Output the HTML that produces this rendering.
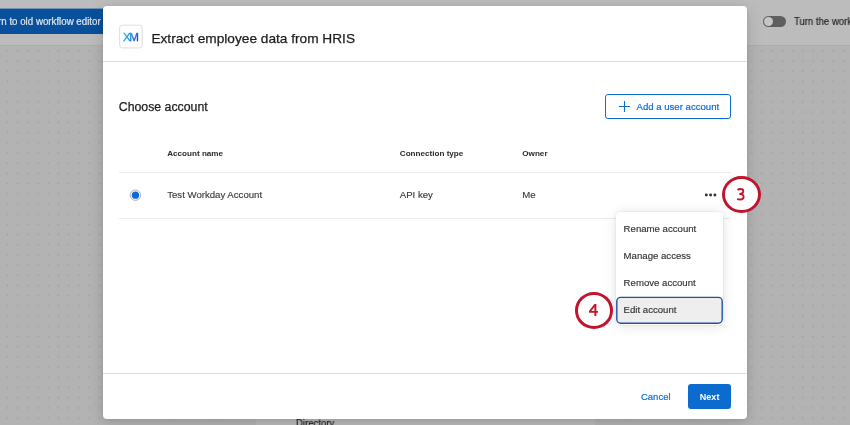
<!DOCTYPE html>
<html>
<head>
<meta charset="utf-8">
<style>
*{box-sizing:border-box;margin:0;padding:0}
html,body{width:850px;height:425px;overflow:hidden}
body{font-family:"Liberation Sans",sans-serif;background:#b3b3b3;position:relative;color:#333}
.abs{position:absolute}
#modal,#oldbtn,#turn,#dir{will-change:transform}
#canvas{left:0;top:0;width:850px;height:425px}
#topbar{left:0;top:0;width:850px;height:46px;background:#bcbcbc;border-bottom:1px solid #acacac}
#oldbtn{left:-80px;top:8px;width:183px;height:26px;background:#08509c;color:#e2e6ee;font-size:10.4px;line-height:25px;white-space:nowrap;border-top:1px solid rgba(222,212,204,.5)}
#oldbtn span{position:absolute;right:2px;top:0;transform:scaleX(.935);transform-origin:100% 50%;-webkit-text-stroke:.2px #e2e6ee}
#toggle{left:763px;top:16px;width:22.6px;height:11px;border-radius:6px;background:#5e5e5e}
#toggle i{position:absolute;left:1px;top:1px;width:9px;height:9px;border-radius:50%;background:#c6c6c6}
#turn{-webkit-text-stroke:.2px #262626;left:794px;top:14.9px;font-size:10.5px;line-height:13px;color:#262626;white-space:nowrap;transform:scaleX(.91);transform-origin:0 50%}
#card{left:256px;top:419px;width:339px;height:10px;background:#bababa}
#dir{-webkit-text-stroke:.2px #262626;left:296.3px;top:416.9px;font-size:10.5px;line-height:13px;color:#262626;transform:scaleX(.91);transform-origin:0 50%}
#modal{left:103px;top:6px;width:644.4px;height:413px;background:#fff;border-radius:4px;box-shadow:0 4px 16px rgba(0,0,0,.15),0 1px 4px rgba(0,0,0,.08)}
#hline{left:0;top:55px;width:100%;height:1px;background:#dcdcdc}
#fline{left:0;top:367px;width:100%;height:1px;background:#dcdcdc}
#xm{left:13px;top:15px;width:30px;height:30px}
#title{left:48.4px;top:24px;font-size:13.68px;line-height:18px;color:#1c1c1c;-webkit-text-stroke:.25px #1c1c1c;white-space:nowrap}
#choose{left:15.8px;top:92.5px;font-size:12.3px;line-height:16px;color:#1c1c1c;-webkit-text-stroke:.25px #1c1c1c;white-space:nowrap}
#addbtn{left:502px;top:88px;width:126px;height:25px;border:1px solid #0b6ed0;border-radius:3px;color:#0b6ed0;font-size:9.6px;line-height:23px;white-space:nowrap}
#addbtn span{position:absolute;left:30.5px;top:0;-webkit-text-stroke:.2px #0b6ed0}
.th{top:143.2px;font-size:8.12px;font-weight:bold;line-height:10px;color:#2a2a2a;white-space:nowrap}
.td{top:182.8px;font-size:9.62px;line-height:12px;color:#3c3c3c;-webkit-text-stroke:.15px #3c3c3c;white-space:nowrap}
.rline{left:16px;width:612px;height:1px;background:#ebebeb}
#menu{left:513px;top:206px;width:107px;height:113px;background:#fff;border-radius:4px;box-shadow:0 1px 14px rgba(0,0,0,.11),0 0 3px rgba(0,0,0,.10)}
.mi{left:7.6px;font-size:9.62px;line-height:12px;color:#333;-webkit-text-stroke:.15px #333;white-space:nowrap}
.call{width:38.5px;height:37.1px;border-radius:50%;border:3.2px solid #c3142d;background:#fff}
.call svg{position:absolute;overflow:visible}
#cancel{left:538px;top:385px;font-size:9.9px;line-height:12px;color:#0b6ed0;transform:scaleX(.96);transform-origin:0 50%;-webkit-text-stroke:.2px #0b6ed0}
#next{left:585px;top:378px;width:43px;height:25px;background:#0b6bcf;border-radius:3px;color:#fff;font-weight:bold;font-size:9.8px;line-height:26px;text-align:center}
#next span{display:inline-block;transform:scaleX(.92)}
</style>
</head>
<body>
<svg id="canvas" class="abs" width="850" height="425">
<defs><pattern id="dots" x="2.4" y="45.8" width="10.196" height="10.2" patternUnits="userSpaceOnUse"><circle cx="5.1" cy="5.1" r="0.95" fill="#a2a2a2"/></pattern></defs>
<rect width="850" height="425" fill="#b3b3b3"/>
<rect width="850" height="425" fill="url(#dots)"/>
</svg>
<div id="topbar" class="abs"></div>
<div id="oldbtn" class="abs"><span>Return to old workflow editor</span></div>
<div id="toggle" class="abs"><i></i></div>
<div id="turn" class="abs">Turn the workflow on</div>
<div id="card" class="abs"></div>
<div id="dir" class="abs">Directory</div>

<div id="modal" class="abs">
  <div id="xm" class="abs">
    <svg class="abs" style="left:0;top:0" width="30" height="30" viewBox="0 0 30 30">
      <defs><linearGradient id="g" gradientUnits="userSpaceOnUse" x1="6" y1="9" x2="22" y2="18"><stop offset="0" stop-color="#25d6a4"/><stop offset="0.3" stop-color="#19aee8"/><stop offset="0.65" stop-color="#1a86e6"/><stop offset="1" stop-color="#2430dc"/></linearGradient></defs>
      <rect x="3.7" y="4.2" width="22.5" height="22.7" rx="2.6" fill="#fff" stroke="#dcdcdc" stroke-width="1"/>
      <text x="6.9" y="19.95" font-family="Liberation Sans, sans-serif" font-size="11.6" letter-spacing="-1.35" fill="url(#g)" stroke="url(#g)" stroke-width="0.35">XM</text>
    </svg>
  </div>
  <div id="title" class="abs">Extract employee data from HRIS</div>
  <div id="hline" class="abs"></div>
  <div id="choose" class="abs">Choose account</div>
  <div id="addbtn" class="abs">
    <svg class="abs" style="left:13px;top:6px" width="11" height="11" viewBox="0 0 11 11"><path d="M5.5 0V11M0 5.5H11" stroke="#0b6ed0" stroke-width="1.1" fill="none"/></svg>
    <span>Add a user account</span>
  </div>
  <div class="abs th" style="left:64.2px">Account name</div>
  <div class="abs th" style="left:296.8px">Connection type</div>
  <div class="abs th" style="left:419.3px">Owner</div>
  <div class="abs rline" style="top:166px"></div>
  <svg class="abs" style="left:24px;top:181px" width="17" height="17" viewBox="0 0 17 17"><circle cx="8.4" cy="8.2" r="5.2" fill="#fff" stroke="#a6a6a6" stroke-width="0.9"/><circle cx="8.45" cy="8.2" r="3.65" fill="#0b6bd3"/></svg>
  <div class="abs td" style="left:64.2px">Test Workday Account</div>
  <div class="abs td" style="left:296.8px">API key</div>
  <div class="abs td" style="left:419.3px">Me</div>
  <svg class="abs" style="left:598px;top:184px" width="20" height="10" viewBox="0 0 20 10"><g fill="#2f3338"><circle cx="5.3" cy="5.05" r="1.45"/><circle cx="9.6" cy="5.05" r="1.45"/><circle cx="13.9" cy="5.05" r="1.45"/></g></svg>
  <div class="abs rline" style="top:212px"></div>
  <div id="menu" class="abs">
    <svg class="abs" style="left:0;top:80px" width="107" height="33" viewBox="0 80 107 33"><rect x="0.8" y="85.4" width="105.4" height="25.8" rx="3.9" fill="#eeeeee" stroke="#1f52a3" stroke-width="1.4"/></svg>
    <div class="abs mi" style="top:10.5px">Rename account</div>
    <div class="abs mi" style="top:37.7px">Manage access</div>
    <div class="abs mi" style="top:64.9px">Remove account</div>
    <div class="abs mi" style="top:92.1px">Edit account</div>
  </div>
  <div id="fline" class="abs"></div>
  <div id="cancel" class="abs">Cancel</div>
  <div id="next" class="abs"><span>Next</span></div>
</div>
<div class="abs call" style="left:722.4px;top:176px"><svg style="left:12.1px;top:9.3px" width="8" height="13" viewBox="0 0 8 13"><path d="M0.5,1.9 C1.5,1.2 2.5,0.95 3.5,0.95 C5.3,0.95 6.3,1.9 6.3,3.3 C6.3,4.9 5,5.9 2.3,5.9 C5.4,5.9 6.6,7 6.6,8.7 C6.6,10.6 5.2,11.5 3.2,11.5 C2,11.5 1,11.3 0.2,10.8" fill="none" stroke="#c3142d" stroke-width="1.9"/></svg></div>
<div class="abs call" style="left:574.7px;top:292px"><svg style="left:11.1px;top:8.7px" width="9" height="12" viewBox="0 0 9 12"><path fill-rule="evenodd" d="M5.4,0 L7.4,0 L7.4,6.9 L9,6.9 L9,8.7 L7.4,8.7 L7.4,12 L5.4,12 L5.4,8.7 L0,8.7 L0,7.1 Z M5.4,2.9 L5.4,6.9 L2.3,6.9 Z" fill="#c3142d"/></svg></div>
</body>
</html>
